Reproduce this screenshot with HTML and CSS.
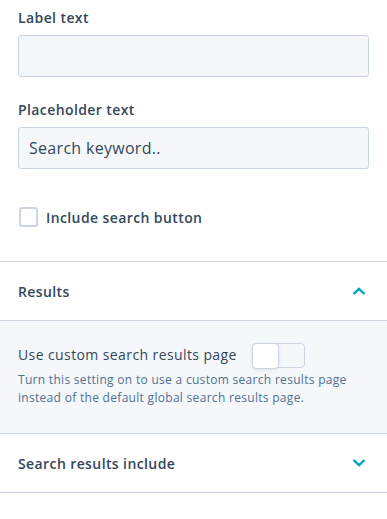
FILE: index.html
```html
<!DOCTYPE html>
<html lang="en">
  <head>
    <meta charset="UTF-8">
    <title>Search input settings</title>
    <link rel="stylesheet" href="styles.css">
  </head>
  <body>
    <div class="panel">
      <div class="fields">
        <label class="label" for="label-text">Label text</label>
        <input class="input" id="label-text" type="text">

        <label class="label label-gap" for="placeholder-text">Placeholder text</label>
        <input class="input" id="placeholder-text" type="text" value="Search keyword..">

        <label class="check">
          <span class="box"></span>
          <span class="check-text">Include search button</span>
        </label>
      </div>

      <div class="section">
        <div class="section-head">
          <span>Results</span>
          <svg class="chev" width="14" height="8" viewBox="0 0 14 8"><path d="M1.5 7 L7 1.8 L12.5 7" fill="none" stroke="#00a4bd" stroke-width="2.4"/></svg>
        </div>
        <div class="section-body">
          <div class="toggle-row">
            <span>Use custom search results page</span>
            <span class="toggle"><span class="knob"></span></span>
          </div>
          <p class="help">Turn this setting on to use a custom search results page instead of the default global search results page.</p>
        </div>
      </div>

      <div class="section">
        <div class="section-head">
          <span>Search results include</span>
          <svg class="chev" width="14" height="8" viewBox="0 0 14 8"><path d="M1.5 1 L7 6.2 L12.5 1" fill="none" stroke="#00a4bd" stroke-width="2.4"/></svg>
        </div>
      </div>
    </div>
  </body>
</html>
```

FILE: styles.css
```css
body {
  margin: 0;
  background: #fff;
  color: #33475b;
  font-family: "Open Sans", "Noto Sans", sans-serif;
  letter-spacing: 0.4px;
}

.fields {
  padding: 8px 18px 33px;
}

.label {
  display: block;
  font-size: 14px;
  font-weight: 600;
  line-height: 20px;
  margin-bottom: 7px;
}

.label-gap {
  margin-top: 23px;
}

.input {
  display: block;
  box-sizing: border-box;
  width: 351px;
  height: 42px;
  margin: 0;
  padding: 0 10px;
  background: #f5f8fa;
  border: 1px solid #cbd6e2;
  border-radius: 3px;
  color: #33475b;
  font-family: inherit;
  font-size: 16px;
  letter-spacing: 0.3px;
  outline: none;
}

.check {
  display: flex;
  align-items: center;
  gap: 8px;
  margin-top: 36px;
  padding-left: 1px;
  font-size: 14px;
  font-weight: 600;
  line-height: 20px;
}

.check-text {
  padding-top: 3px;
}

.box {
  box-sizing: border-box;
  width: 19px;
  height: 20px;
  border: 2px solid #cbd6e2;
  border-radius: 3px;
  background: #fff;
}

.section {
  border-top: 1px solid #cbd6e2;
}

.section:last-child {
  border-bottom: 1px solid #cbd6e2;
}

.section-head {
  display: flex;
  align-items: center;
  justify-content: space-between;
  height: 58px;
  padding: 0 21px 0 18px;
  font-size: 14px;
  font-weight: 600;
}

.section-body {
  border-top: 1px solid #cbd6e2;
  background: #f5f8fa;
  padding: 21px 18px 26px;
}

.toggle-row {
  display: flex;
  align-items: center;
  gap: 15px;
  font-size: 14px;
  font-weight: 500;
  line-height: 26px;
}

.toggle {
  box-sizing: border-box;
  position: relative;
  width: 53px;
  height: 25px;
  border: 1px solid #cbd6e2;
  border-radius: 4px;
  background: #f5f8fa;
}

.knob {
  position: absolute;
  left: -1px;
  top: -1px;
  box-sizing: border-box;
  width: 27px;
  height: 26px;
  border: 1px solid #cbd6e2;
  border-radius: 4px;
  background: #fff;
  box-shadow: 0 1px 3px rgba(45, 62, 80, 0.12);
}

.help {
  margin: 3px 0 0;
  color: #516f90;
  font-size: 12px;
  line-height: 18px;
  letter-spacing: 0.3px;
}
```
